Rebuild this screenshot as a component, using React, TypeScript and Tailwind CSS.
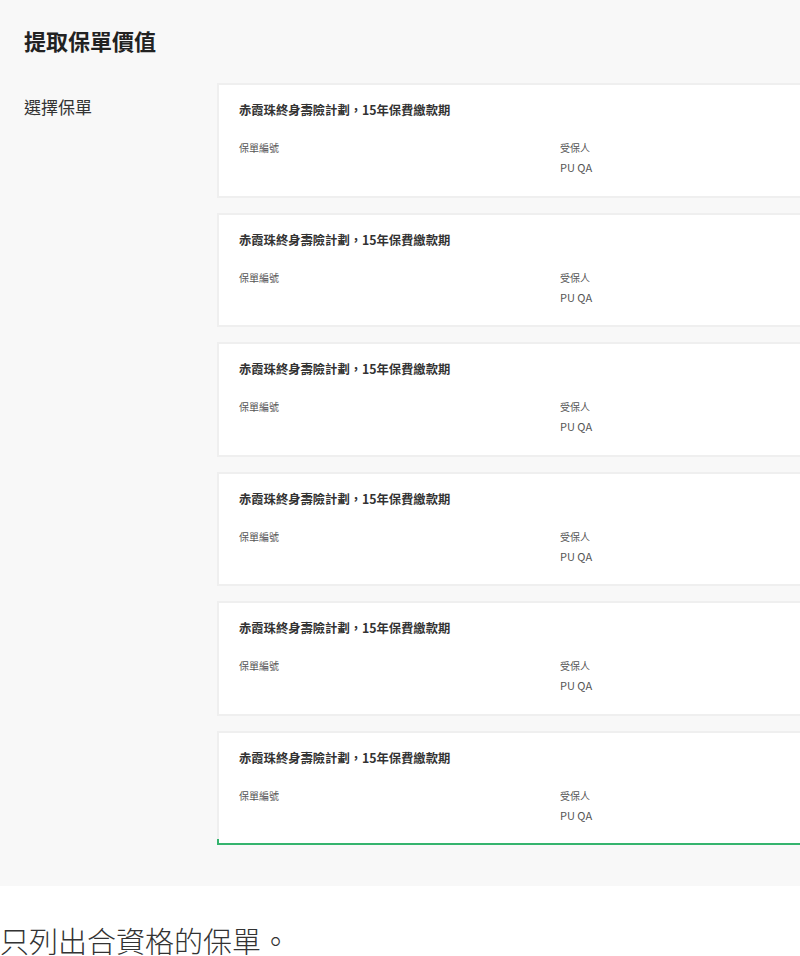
const policies = Array.from({ length: 6 }, (_, i) => ({
  id: i,
  name: "赤霞珠終身壽險計劃，15年保費繳款期",
  insured: "PU QA",
}));

function PolicyCard({
  name,
  insured,
  selected,
}: {
  name: string;
  insured: string;
  selected?: boolean;
}) {
  return (
    <div
      className={
        selected
          ? "relative h-[114.5px] border-2 border-[#efefef] border-b-[#35b46e] bg-white px-5 pt-4"
          : "relative h-[114.5px] border-2 border-[#efefef] bg-white px-5 pt-4"
      }
    >
      <div className="text-[12.3px] font-bold leading-[18px] text-[#333]">{name}</div>
      <div className="mt-[22px] grid grid-cols-[321px_1fr]">
        <div className="text-[10px] leading-[14px] text-[#555]">保單編號</div>
        <div>
          <div className="text-[10px] leading-[14px] text-[#555]">受保人</div>
          <div className="mt-1 text-[11px] leading-4 text-[#555]">{insured}</div>
        </div>
      </div>
      {selected && (
        <div className="absolute bottom-[-2px] left-[-2px] h-[6px] w-[2px] bg-[#35b46e]" />
      )}
    </div>
  );
}

export default function App() {
  return (
    <div
      className="w-[800px] overflow-hidden bg-white"
      style={{ fontFamily: '"Noto Sans CJK TC", "Noto Sans", sans-serif' }}
    >
      <div className="bg-[#f8f8f8] px-6 pt-7 pb-[41px]">
        <h2 className="text-[22px] font-bold leading-6 text-[#222]">提取保單價值</h2>
        <div className="mt-[31px] flex">
          <div className="w-[193px] shrink-0 pt-[12px] text-[17px] leading-6 text-[#333]">
            選擇保單
          </div>
          <div className="flex w-[700px] shrink-0 flex-col gap-[15px]">
            {policies.map((p, i) => (
              <PolicyCard
                key={p.id}
                name={p.name}
                insured={p.insured}
                selected={i === policies.length - 1}
              />
            ))}
          </div>
        </div>
      </div>
      <p className="pt-[39px] text-[29px] font-light leading-[30px] text-[#333]">
        只列出合資格的保單。
      </p>
    </div>
  );
}
